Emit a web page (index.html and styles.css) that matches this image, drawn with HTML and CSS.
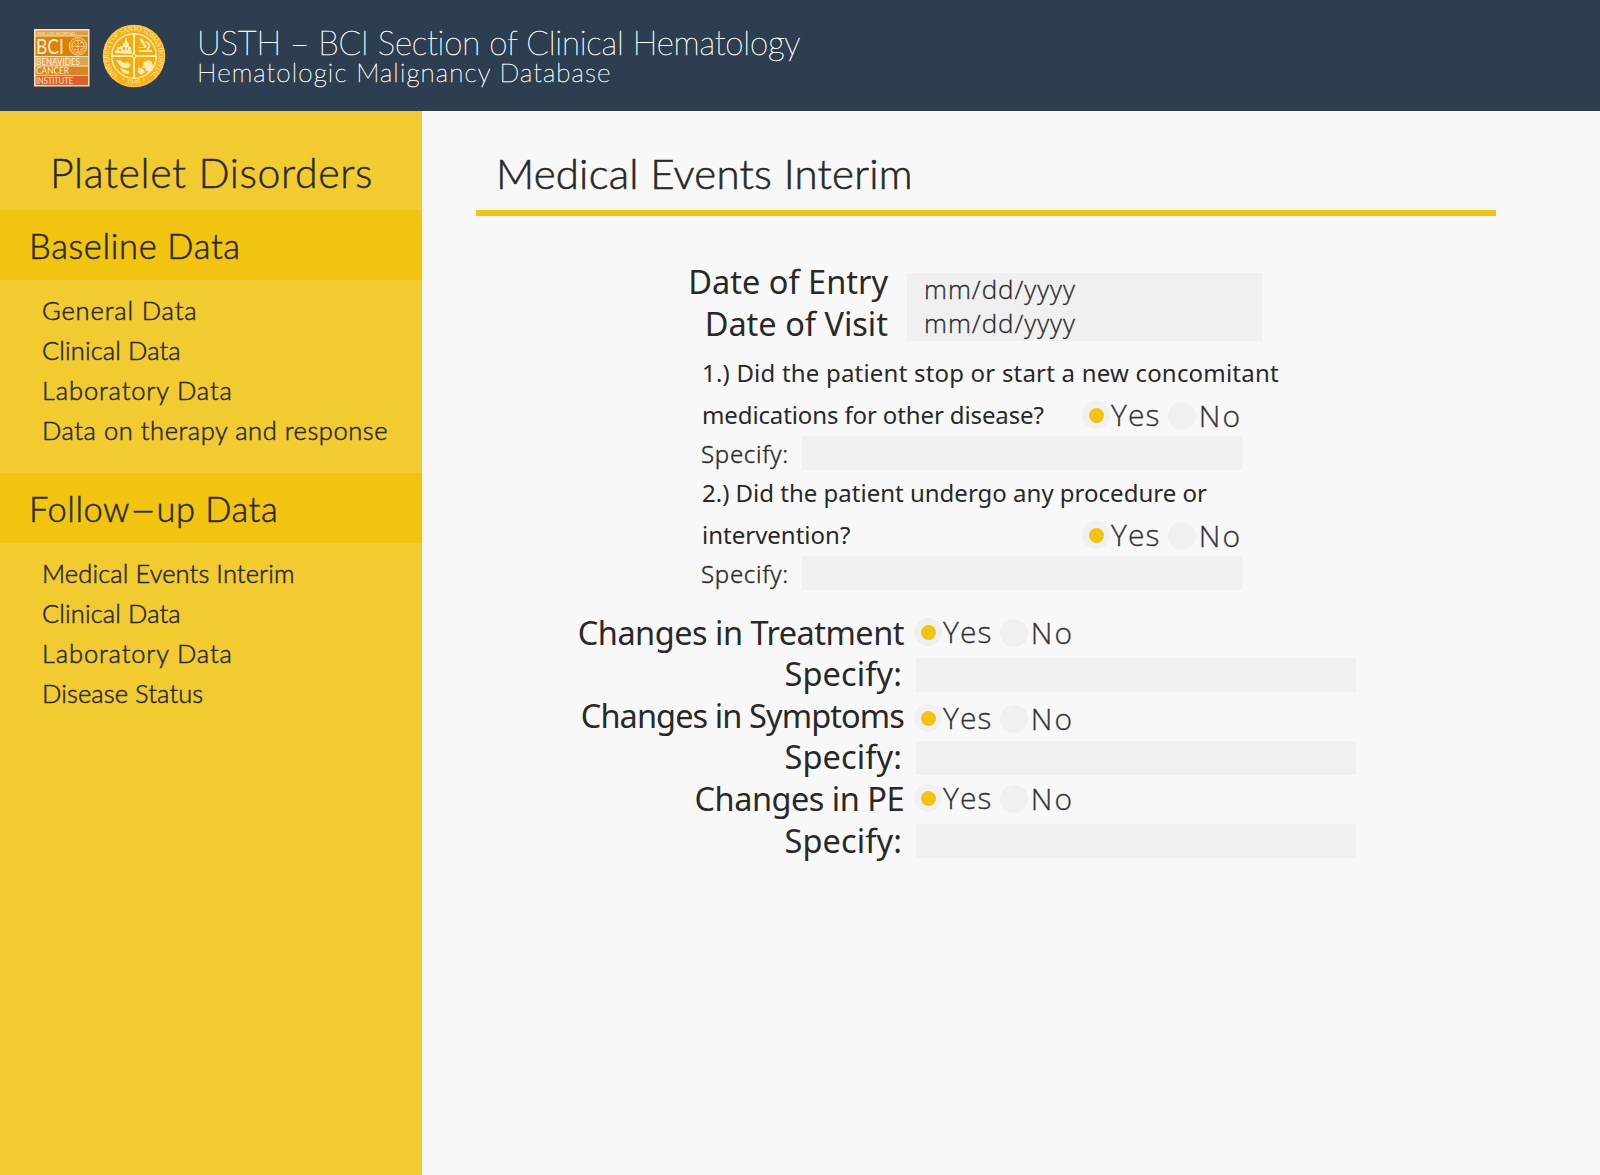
FILE: index.html
```html
<!DOCTYPE html>
<html lang="en">
<head>
<meta charset="utf-8">
<title>Hematologic Malignancy Database</title>
<link rel="stylesheet" href="styles.css">
</head>
<body>
<header class="topbar">
  <svg class="logo-bci" viewBox="0 0 56 58" width="56" height="58">
    <rect width="55.500" height="57.500" fill="#f8e3b4"/>
    <rect x="1.500" y="1.500" width="52.500" height="5" fill="#dfa049"/>
    <rect x="1.500" y="7.500" width="52.500" height="19.500" fill="#dc8207"/>
    <rect x="1.500" y="28" width="52.500" height="8.500" fill="#dda253"/>
    <rect x="1.500" y="37.500" width="52.500" height="8.500" fill="#dc8424"/>
    <rect x="1.500" y="47" width="52.500" height="9" fill="#e0602a"/>
    <g fill="#fdeecb" font-family="Lato, sans-serif">
      <text x="3" y="6" font-size="4.600" textLength="39" lengthAdjust="spacingAndGlyphs">THE UST HOSPITAL</text>
      <text x="2" y="24.500" font-size="22" textLength="28" lengthAdjust="spacingAndGlyphs">BCI</text>
      <text x="2" y="35.500" font-size="9.600" textLength="44" lengthAdjust="spacingAndGlyphs">BENAVIDES</text>
      <text x="2" y="45.200" font-size="9.600" textLength="33" lengthAdjust="spacingAndGlyphs">CANCER</text>
      <text x="2" y="55" font-size="9.600" textLength="37" lengthAdjust="spacingAndGlyphs">INSTITUTE</text>
    </g>
    <g fill="none" stroke="#f7d9a0" stroke-width=".9">
      <circle cx="44" cy="17.300" r="8.800"/><circle cx="44" cy="17.300" r="6.200"/>
      <circle cx="44" cy="17.300" r="7.500" stroke-dasharray="1 1"/>
      <path d="M44 11v12.500M38 17.300h12M40 14l2 1.500M46 14l3-1M40 20l2.500 1M46 21l3-2"/>
    </g>
  </svg>
  <svg class="logo-seal" viewBox="0 0 64 64" width="64" height="64">
    <defs>
      <path id="ring" d="M16 51.500A25.200 25.200 0 1 1 48 51.500"/>
      <path id="ring-year" d="M19.500 57A28 28 0 0 0 44.500 57"/>
    </defs>
    <circle cx="32" cy="32" r="31.300" fill="#fbaf14"/>
    <circle cx="32" cy="32" r="30.500" fill="none" stroke="#fdc95a" stroke-width="1"/>
    <circle cx="32" cy="32" r="22.300" fill="#fba905" stroke="#fff0c4" stroke-width="1.500"/>
    <path d="M32 10v44M10 32h44" stroke="#fff0c4" stroke-width="2"/>
    <circle cx="32" cy="32" r="2" fill="#fbb01a" stroke="#fff0c4"/>
    <g fill="#ffedb8">
      <path d="M13 29v-2l2-1v-3h3v-1h3v-3l2-1v-3l1-2 1 2v3l2 1v4h2v4l1 1v2zM17 27h2v-2h-2zM21 26h2v-3h-2zM25 26h1v-3h-1z"/>
      <path d="M37 15l3-1 5 9-2 1zM43 17c6 1 7 6 3 9h4v2H37v-2h7c3-3 3-5 0-7zM36 23h7v1h-7z"/>
      <path d="M14 36l4 0 4 3 4-1 3 3-3 3-4 0-4-2zM18 44l4 1 6 3-2 2-5-1z"/>
      <path d="M42 38l5-2 3 2 1 5-3 5-4-1-1-3-3 0zM36 43l5 2 2 3-4 3-3-3z"/>
    </g>
    <g fill="#fff0c4" font-family="Liberation Serif, serif" font-size="7">
      <text><textPath href="#ring" textLength="123">UNIVERSITY OF SANTO TOMAS HOSPITAL</textPath></text>
      <text font-size="6.500"><textPath href="#ring-year" textLength="25">• 1946 •</textPath></text>
    </g>
  </svg>
  <div class="brand">
    <div class="brand-title">USTH – BCI Section of Clinical Hematology</div>
    <div class="brand-sub">Hematologic Malignancy Database</div>
  </div>
</header>
<div class="layout">
  <nav class="sidebar">
    <h1 class="side-title">Platelet Disorders</h1>
    <h2 class="side-head">Baseline Data</h2>
    <ul class="side-list">
      <li class="loose">General Data</li>
      <li>Clinical Data</li>
      <li class="loose">Laboratory Data</li>
      <li class="medium">Data on therapy and response</li>
    </ul>
    <h2 class="side-head follow-up">Follow<span class="dash">–</span>up Data</h2>
    <ul class="side-list">
      <li>Medical Events Interim</li>
      <li>Clinical Data</li>
      <li class="loose">Laboratory Data</li>
      <li>Disease Status</li>
    </ul>
  </nav>
  <main class="content">
    <h1 class="page-title">Medical Events Interim</h1>
    <form>
      <div class="dates">
        <div class="labels date-labels"><label>Date of Entry</label><label>Date of Visit</label></div>
        <div class="date-fields"><div class="date">mm/dd/yyyy</div><div class="date">mm/dd/yyyy</div></div>
      </div>
      <section class="question">
        <p class="lead">1.) Did the patient stop or start a new concomitant</p>
        <div class="answer">
          <p class="tail">medications for other disease?</p>
          <div class="choice"><i class="radio on"></i><span class="yes">Yes</span><i class="radio off"></i><span class="no">No</span></div>
        </div>
        <div class="specify"><label>Specify:</label><div class="field"></div></div>
      </section>
      <section class="question">
        <p>2.) Did the patient undergo any procedure or</p>
        <div class="answer">
          <p>intervention?</p>
          <div class="choice"><i class="radio on"></i><span class="yes">Yes</span><i class="radio off"></i><span class="no">No</span></div>
        </div>
        <div class="specify"><label>Specify:</label><div class="field"></div></div>
      </section>
      <div class="changes">
        <div class="labels change-labels">
          <label>Changes in Treatment</label>
          <label class="spec">Specify:</label>
          <label class="symptoms">Changes in Symptoms</label>
          <label class="spec">Specify:</label>
          <label>Changes in PE</label>
          <label class="spec">Specify:</label>
        </div>
        <div class="change-fields">
          <div class="choice"><i class="radio on"></i><span class="yes">Yes</span><i class="radio off"></i><span class="no">No</span></div>
          <div class="field wide-gap"></div>
          <div class="choice"><i class="radio on"></i><span class="yes">Yes</span><i class="radio off"></i><span class="no">No</span></div>
          <div class="field"></div>
          <div class="choice"><i class="radio on"></i><span class="yes">Yes</span><i class="radio off"></i><span class="no">No</span></div>
          <div class="field wide-gap"></div>
        </div>
      </div>
    </form>
  </main>
</div>
</body>
</html>
```
FILE: styles.css
```css
* { box-sizing: border-box; margin: 0; padding: 0; }
body { background: #f8f8f8; color: #282828; font-family: "Noto Sans", "Open Sans", sans-serif; height: 1175px; overflow: hidden; font-variant-ligatures: no-common-ligatures; }
h1, h2 { font-weight: 300; }

/* Header */
.topbar { display: flex; height: 111px; background: #2d3e50; color: #fff; padding: 0 34px; font-family: Lato, sans-serif; }
.logo-bci { margin-top: 29px; }
.logo-seal { margin: 24px 0 0 12px; }
.brand { margin: 22px 0 0 31px; font-weight: 100; white-space: nowrap; -webkit-text-stroke: 0.5px #fff; }
.brand-title { font-size: 33px; line-height: 40px; letter-spacing: -0.2px; }
.brand-sub { font-size: 26px; line-height: 21px; letter-spacing: 1.12px; }

/* Sidebar */
.layout { display: flex; height: 1064px; }
.sidebar { width: 422px; background: #f2cb31; font-family: Lato, sans-serif; white-space: nowrap; }
.side-title { height: 99px; padding: 32px 0 0 50px; font-size: 41px; line-height: 60px; letter-spacing: 0.6px; -webkit-text-stroke: 0.4px #282828; }
.side-head { height: 70px; padding-left: 29px; background: #f1c40f; font-size: 34.5px; line-height: 72px; letter-spacing: 0.65px; -webkit-text-stroke: 0.5px #282828; }
.side-head.follow-up { letter-spacing: 0.5px; }
.dash { display: inline-block; margin: 0 3px; transform: scaleX(1.35); }
.side-list { list-style: none; height: 193px; padding: 10px 0 0 42px; font-size: 25.5px; font-weight: 300; line-height: 40px; letter-spacing: 0.1px; -webkit-text-stroke: 0.5px #282828; }
.loose { letter-spacing: 0.86px; }
.medium { letter-spacing: 0.55px; }

/* Page heading */
.content { width: 1074px; padding-left: 54px; white-space: nowrap; }
.page-title { height: 105px; padding: 31px 0 0 20px; border-bottom: 6px solid #f1c40f; font-family: Lato, sans-serif; font-size: 42px; line-height: 62px; letter-spacing: 0.2px; -webkit-text-stroke: 0.6px #282828; }

/* Dates */
.dates { display: flex; margin-top: 43px; height: 93px; }
.labels { display: flex; flex-direction: column; text-align: right; font-size: 32.5px; }
.date-labels { width: 412px; padding-top: 2px; line-height: 42px; }
.date-fields { width: 355px; height: 68px; margin: 14px 0 0 19px; }
.date { height: 34px; padding-left: 17px; background: #f0f0f0; font: 300 26px/32px "Open Sans", sans-serif; letter-spacing: 0.95px; -webkit-text-stroke: 0.3px #333; }

/* Questions */
.question { width: 766px; margin-bottom: 1px; padding-left: 226px; font-size: 24px; line-height: 42px; }
.lead { letter-spacing: 0.2px; }
.tail { letter-spacing: -0.12px; }
.answer { display: flex; justify-content: space-between; }
.specify { display: flex; justify-content: space-between; line-height: 35px; font-weight: 300; letter-spacing: 0.7px; -webkit-text-stroke: 0.4px #333; }
.specify label { margin-left: -1px; }
.field { width: 440px; height: 34px; background: #f0f0f0; }

.choice { display: flex; align-items: center; width: 160px; height: 42px; font: 300 30px/42px "Open Sans", sans-serif; color: #333; letter-spacing: 1.1px; -webkit-text-stroke: 0.3px #333; }
.radio { display: flex; align-items: center; justify-content: center; flex: none; width: 28px; height: 28px; border-radius: 50%; background: #f0f0f0; }
.radio.on::before { content: ""; width: 15px; height: 15px; border-radius: 50%; background: #f1c40f; }
.yes { width: 59px; padding-left: 1px; }
.radio.off { margin-top: 2px; }
.no { margin: 2px 0 0 3px; letter-spacing: 2px; }

/* Changes */
.changes { display: flex; margin-top: 19px; }
.change-labels { width: 428px; padding-top: 1.5px; line-height: 41.65px; letter-spacing: -0.5px; }
.change-labels .symptoms { letter-spacing: -0.9px; }
.change-labels .spec { padding-right: 2px; letter-spacing: 0.1px; }
.change-fields { margin: 1px 0 0 10px; }
.change-fields .field { margin: 2px 0 2px 2px; }
.change-fields .field.wide-gap { margin: 5px 0 5px 2px; }
```
